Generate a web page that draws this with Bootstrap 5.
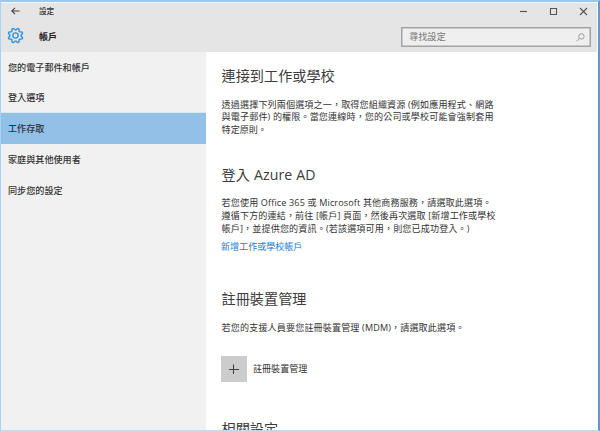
<!DOCTYPE html>
<html lang="zh-Hant">
<head>
<meta charset="utf-8">
<meta name="viewport" content="width=device-width, initial-scale=1">
<title>設定</title>
<link rel="stylesheet" href="https://cdn.jsdelivr.net/npm/bootstrap@5.3.0/dist/css/bootstrap.min.css">
<style>
body{font-family:"Open Sans","Noto Sans CJK TC",sans-serif;font-size:9.05px;line-height:12.5px;color:#333}
.window{height:431px;border-top:2px solid #9cc8ec;border-left:1px solid #a9d2f5;border-right:2px solid #5b9bd0;border-bottom:1px solid #bcdcf6}
.inner{border-top:1px solid #f4f8fc;border-right:1px solid #f4f8fc}
.top{height:49px;background:#e5e5e5}
.titlebar{height:16px;padding-left:10px;padding-right:9px}
.titlebar .caption{margin-left:19px;font-size:7.6px;font-weight:500}
.winbtns{gap:21px}
.headrow{height:33px;padding-left:6px;padding-right:6px}
.headrow .page-name{margin-left:15px;margin-top:4px;font-size:9.1px;font-weight:700;color:#222}
.search{width:190px;height:20px;border:1.5px solid #a3a3a3;box-shadow:inset 0 0 0 .5px #a3a3a3;background:#efefef;color:#777;font-size:9.2px;padding:1px 5px 0 7px;margin-top:2px}
.side{width:205px;background:#f1f1f1}
.side .list-group-item{height:30.6px;padding:1px 0 0 7px;background:transparent;border:0;color:#333;font-weight:500;font-size:9.1px;line-height:12px}
.side .list-group-item.active{background:#92c0e6;color:#333;height:31px;margin:0;box-shadow:0 -1px #dfe6ec}
.main-pane{padding-left:15px;background:#fff}
.main-pane .title,.main-pane p{padding-left:.6px}
.title{font-size:14.15px;line-height:20px;font-weight:400;color:#3c3c3c;margin:0}
.main-pane p{margin:12.5px 0 0}
.ln{display:block;white-space:nowrap}
.first{margin-top:14px}
.azure{margin-top:28.5px}
.main-pane p.azure-text{margin-top:11px;line-height:13px}
.mdm{margin-top:36px}
.plus-row{margin-top:21.5px}
.plus-row span{margin-left:6px;padding-top:2px}
.related{margin-top:37.5px}
.plus{width:26px;height:26px;background:#ccc}
.lnk{color:#1a80d2;text-decoration:none;margin-top:6px}
</style>
<script src="https://cdn.jsdelivr.net/npm/bootstrap@5.3.0/dist/js/bootstrap.bundle.min.js"></script>
</head>
<body class="overflow-hidden">
<div class="window overflow-hidden">
<div class="inner d-flex flex-column h-100">
  <header class="top flex-shrink-0">
    <div class="titlebar d-flex align-items-center">
      <svg width="9" height="8" viewBox="0 0 9 8" fill="none" stroke="#444" stroke-width="1.1"><path d="M8.6 4H.9M4 .8.8 4 4 7.2"/></svg>
      <span class="caption">設定</span>
      <div class="winbtns d-flex align-items-center ms-auto">
        <svg width="9" height="9" viewBox="0 0 9 9" stroke="#555" stroke-width="1.2"><path d="M1 4.5h7"/></svg>
        <svg width="9" height="9" viewBox="0 0 9 9" fill="none" stroke="#555" stroke-width="1.1"><path d="M1.5 1.5h6v6h-6z"/></svg>
        <svg width="9" height="9" viewBox="0 0 9 9" stroke="#555" stroke-width="1.1"><path d="M1 1l7 7M8 1 1 8"/></svg>
      </div>
    </div>
    <div class="headrow d-flex align-items-center">
      <svg width="17" height="17" viewBox="-8.5 -8.5 17 17" fill="none" stroke="#3292dc" stroke-width="1.4" stroke-linejoin="round"><path id="gear"/><circle r="2.6"/></svg>
      <span class="page-name">帳戶</span>
      <div class="search d-flex align-items-center ms-auto">
        <span>尋找設定</span>
        <svg class="ms-auto" width="9" height="9" viewBox="0 0 9 9" fill="none" stroke="#999" stroke-width="1"><circle cx="5.4" cy="3.4" r="2.7"/><path d="M3.5 5.3.5 8.3"/></svg>
      </div>
    </div>
  </header>
  <div class="d-flex flex-grow-1 overflow-hidden">
    <nav class="side flex-shrink-0">
      <div class="list-group list-group-flush">
        <a class="list-group-item d-flex align-items-center">您的電子郵件和帳戶</a>
        <a class="list-group-item d-flex align-items-center">登入選項</a>
        <a class="list-group-item active d-flex align-items-center">工作存取</a>
        <a class="list-group-item d-flex align-items-center">家庭與其他使用者</a>
        <a class="list-group-item d-flex align-items-center">同步您的設定</a>
      </div>
    </nav>
    <main class="main-pane flex-grow-1">
      <h2 class="title first">連接到工作或學校</h2>
      <p><span class="ln" data-w="272">透過選擇下列兩個選項之一，取得您組織資源 (例如應用程式、網路</span><span class="ln" data-w="272">與電子郵件) 的權限。當您連線時，您的公司或學校可能會強制套用</span><span class="ln">特定原則。</span></p>
      <h2 class="title azure"><span class="ln" data-w="94">登入 Azure AD</span></h2>
      <p class="azure-text"><span class="ln" data-w="270">若您使用 Office 365 或 Microsoft 其他商務服務，請選取此選項。</span><span class="ln" data-w="274">遵循下方的連結，前往 [帳戶] 頁面，然後再次選取 [新增工作或學校</span><span class="ln" data-w="248">帳戶]，並提供您的資訊。(若該選項可用，則您已成功登入。)</span></p>
      <a class="lnk ln">新增工作或學校帳戶</a>
      <h2 class="title mdm">註冊裝置管理</h2>
      <p><span class="ln" data-w="243">若您的支援人員要您註冊裝置管理 (MDM)，請選取此選項。</span></p>
      <div class="plus-row d-flex align-items-center">
        <div class="plus d-flex align-items-center justify-content-center"><svg width="10" height="10" viewBox="0 0 10 10" stroke="#444" stroke-width="1.1"><path d="M0 5.5h10M4.5 .5v10"/></svg></div>
        <span>註冊裝置管理</span>
      </div>
      <h2 class="title related">相關設定</h2>
    </main>
  </div>
</div>
</div>
<script>
// eight rounded teeth around the gear's centre
let d='';
for(let i=0;i<=128;i++){const a=i/128*2*Math.PI,r=6.5+1*Math.tanh(1.6*Math.cos(8*(a-Math.PI/8)));d+=(i?'L':'M')+(r*Math.cos(a)).toFixed(2)+' '+(r*Math.sin(a)).toFixed(2)}
document.getElementById('gear').setAttribute('d',d+'Z');
// spread each line to its measure
document.querySelectorAll('[data-w]').forEach(e=>{
  e.style.display='table';
  const w=e.getBoundingClientRect().width;
  e.style.letterSpacing=((+e.dataset.w-w)/e.textContent.length)+'px';
});
</script>
</body>
</html>
